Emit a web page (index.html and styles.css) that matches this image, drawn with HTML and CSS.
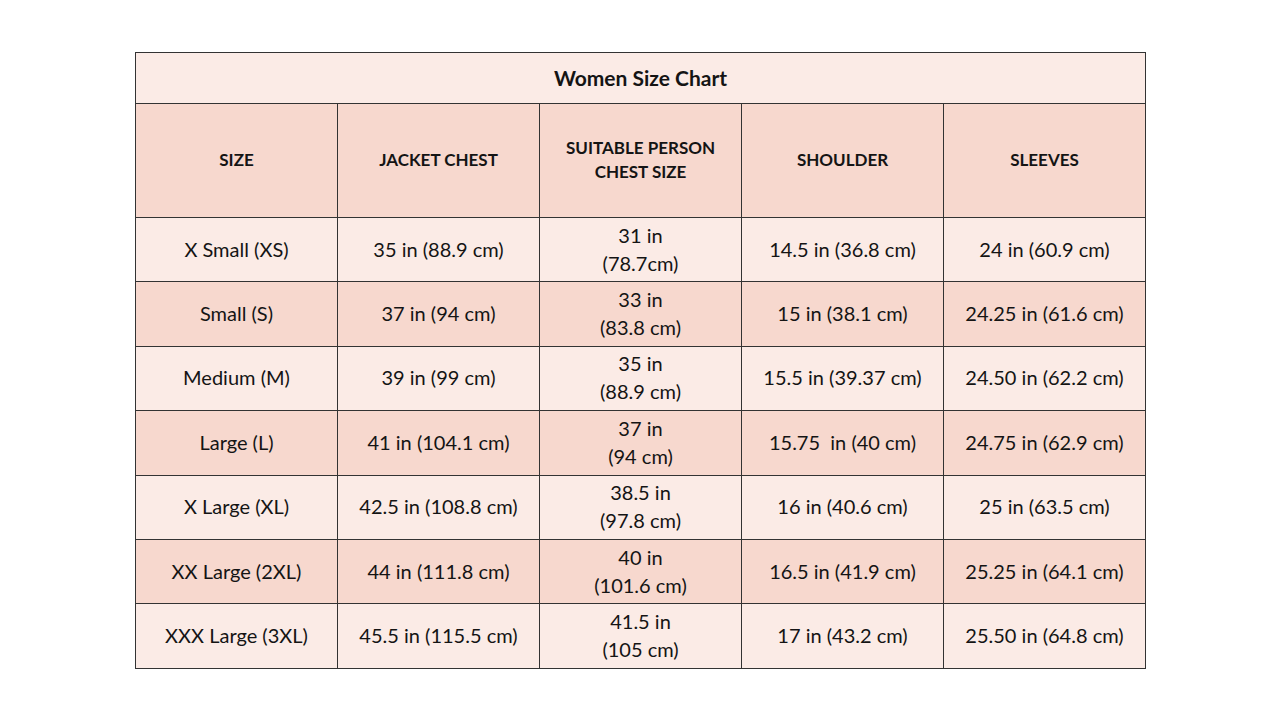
FILE: index.html
```html
<!DOCTYPE html>
<html>
<head>
<meta charset="utf-8">
<link rel="stylesheet" href="styles.css">
</head>
<body>
<div class="page">
<table class="chart">
  <tr class="title-row"><th colspan="5">Women Size Chart</th></tr>
  <tr class="head-row">
    <th>SIZE</th><th>JACKET CHEST</th><th>SUITABLE PERSON<br>CHEST SIZE</th><th>SHOULDER</th><th>SLEEVES</th>
  </tr>
  <tr class="light"><td>X Small (XS)</td><td>35 in (88.9 cm)</td><td class="two">31 in<br>(78.7cm)</td><td>14.5 in (36.8 cm)</td><td>24 in (60.9 cm)</td></tr>
  <tr class="dark"><td>Small (S)</td><td>37 in (94 cm)</td><td class="two">33 in<br>(83.8 cm)</td><td>15 in (38.1 cm)</td><td>24.25 in (61.6 cm)</td></tr>
  <tr class="light"><td>Medium (M)</td><td>39 in (99 cm)</td><td class="two">35 in<br>(88.9 cm)</td><td>15.5 in (39.37 cm)</td><td>24.50 in (62.2 cm)</td></tr>
  <tr class="dark"><td>Large (L)</td><td>41 in (104.1 cm)</td><td class="two">37 in<br>(94 cm)</td><td>15.75&nbsp; in (40 cm)</td><td>24.75 in (62.9 cm)</td></tr>
  <tr class="light"><td>X Large (XL)</td><td>42.5 in (108.8 cm)</td><td class="two">38.5 in<br>(97.8 cm)</td><td>16 in (40.6 cm)</td><td>25 in (63.5 cm)</td></tr>
  <tr class="dark"><td>XX Large (2XL)</td><td>44 in (111.8 cm)</td><td class="two">40 in<br>(101.6 cm)</td><td>16.5 in (41.9 cm)</td><td>25.25 in (64.1 cm)</td></tr>
  <tr class="light"><td>XXX Large (3XL)</td><td>45.5 in (115.5 cm)</td><td class="two">41.5 in<br>(105 cm)</td><td>17 in (43.2 cm)</td><td>25.50 in (64.8 cm)</td></tr>
</table>
</div>
</body>
</html>
```
FILE: styles.css
```css
html, body {
  margin: 0;
  padding: 0;
  background: #ffffff;
}
.page {
  width: 1280px;
  height: 720px;
  padding-top: 52px;
  box-sizing: border-box;
}
.chart {
  margin-left: 135px;
  width: 1011px;
  border-collapse: collapse;
  table-layout: fixed;
  font-family: Lato, "Open Sans", sans-serif;
  color: #141414;
}
.chart th, .chart td {
  border: 1px solid #333333;
  text-align: center;
  vertical-align: middle;
  padding: 0 0 2px 0;
}
.title-row th {
  height: 48px;
  background: #fbebe6;
  font-size: 21px;
  font-weight: 700;
}
.head-row th {
  height: 111px;
  background: #f7d8ce;
  font-size: 17px;
  font-weight: 700;
  line-height: 24px;
}
.chart td {
  height: 61.4px;
  font-size: 20px;
  line-height: 28px;
}
.light td { background: #fbebe6; }
.dark td { background: #f7d8ce; }
```
